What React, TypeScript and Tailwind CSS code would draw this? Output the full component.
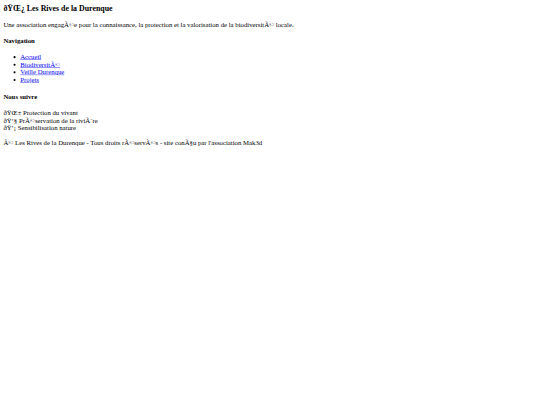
import React from "react";

export default function App() {
  return (
    <div className="w-[540px] h-[405px] overflow-hidden bg-white">
      <div className="w-[1280px] origin-top-left scale-[0.421875] p-[8px] font-['Liberation_Serif',serif] text-[16px] leading-[normal] text-black">
        <h3 className="m-0 text-[18.72px] font-bold">{"\u00F0\u0178\u0152\u00BF Les Rives de la Durenque"}</h3>
        <p className="mt-[21px] mb-[16px]">
          {"Une association engag\u00C3\u00A9e pour la connaissance, la protection et la valorisation de la biodiversit\u00C3\u00A9 locale."}
        </p>
        <h4 className="mt-[18px] mb-[21.28px] text-[16px] font-bold">Navigation</h4>
        <ul className="my-[16px] list-disc pl-[40px]">
          <li><a href="#" className="text-[#0000EE] underline">Accueil</a></li>
          <li><a href="#" className="text-[#0000EE] underline">{"Biodiversit\u00C3\u00A9"}</a></li>
          <li><a href="#" className="text-[#0000EE] underline">Veille Durenque</a></li>
          <li><a href="#" className="text-[#0000EE] underline">Projets</a></li>
        </ul>
        <h4 className="mt-[21.28px] mb-[21.28px] text-[16px] font-bold">Nous suivre</h4>
        <p className="my-[16px]">
          {"\u00F0\u0178\u0152\u00B1 Protection du vivant"}
          <br />
          {"\u00F0\u0178\u2019\u00A7 Pr\u00C3\u00A9servation de la rivi\u00C3\u00A8re"}
          <br />
          {"\u00F0\u0178\u2019\u00A1 Sensibilisation nature"}
        </p>
        <p className="my-[16px]">
          {"\u00C2\u00A9 Les Rives de la Durenque - Tous droits r\u00C3\u00A9serv\u00C3\u00A9s - site con\u00C3\u00A7u par l'association Mak3d"}
        </p>
      </div>
    </div>
  );
}
